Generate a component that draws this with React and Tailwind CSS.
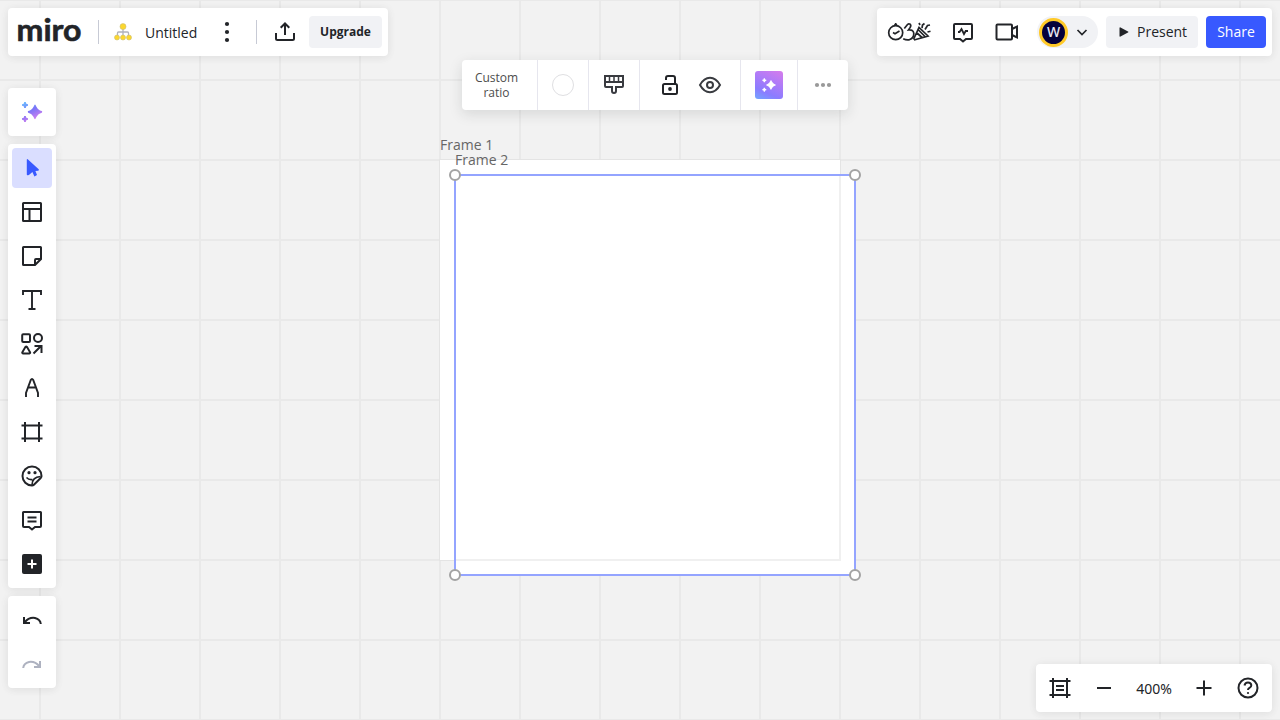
import React from "react";

const panel = "pointer-events-auto rounded bg-white shadow-[0_2px_8px_rgba(34,36,40,0.06),0_0_12px_rgba(34,36,40,0.04)]";

function Icon({ children, size = 24, sw = 2, className = "" }) {
  return (
    <svg
      width={size}
      height={size}
      viewBox="0 0 24 24"
      fill="none"
      stroke="currentColor"
      strokeWidth={sw}
      className={"shrink-0 " + className}
    >
      {children}
    </svg>
  );
}

function Sparkles({ fill, size = 24 }) {
  return (
    <svg width={size} height={size} viewBox="0 0 24 24" fill={fill} className="shrink-0">
      <path d="M15 4.500c.9 0 1.500 5.200 6.800 6.600.5.200.5 1.400 0 1.600C16.500 14 15.900 19.200 15 19.200S13.500 14 8.200 12.700c-.5-.2-.5-1.400 0-1.600C13.500 9.800 14.100 4.500 15 4.500z" />
      <path d="M4.200 2h1.600l.5 1.700L8 4.200v1.600l-1.700.5L5.800 8H4.200l-.5-1.700L2 5.800V4.200l1.700-.5zM4.200 16h1.600l.5 1.700 1.700.5v1.600l-1.700.5-.5 1.700H4.200l-.5-1.700-1.700-.5v-1.600l1.700-.5z" />
    </svg>
  );
}

function OrgIcon() {
  return (
    <svg width="18" height="18" viewBox="0 0 18 18" className="shrink-0">
      <path d="M9 5v8M3.500 13V10Q3.500 9 4.500 9h9q1 0 1 1v3" fill="none" stroke="#b0b2bc" strokeWidth="1.300" />
      <g fill="#fcd72e" stroke="#c9bd78" strokeWidth=".6">
        <circle cx="9" cy="3.600" r="3" />
        <circle cx="3" cy="14.500" r="2.500" />
        <circle cx="9" cy="14.500" r="2.500" />
        <circle cx="15" cy="14.500" r="2.500" />
      </g>
    </svg>
  );
}

function Header() {
  return (
    <header className="flex justify-between">
      <div className={panel + " flex h-12 w-[380px] items-center"}>
        <svg className="ml-[7px] shrink-0" width="70" height="48" viewBox="0 0 70 48" fontFamily="Lato, sans-serif" fontSize="31" fontWeight="700">
          <text x="1.500" y="33" textLength="65" lengthAdjust="spacingAndGlyphs" fill="#222428" stroke="#222428" strokeWidth=".6">miro</text>
        </svg>
        <div className="ml-[13px] h-6 w-px bg-[#c7cad5]" />
        <div className="ml-[15px]"><OrgIcon /></div>
        <span className="ml-[13px] w-[52px] pt-px text-sm text-[#222428]">Untitled</span>
        <svg className="ml-[18px] shrink-0" width="24" height="24" fill="#222428">
          <circle cx="12" cy="4" r="2.100" /><circle cx="12" cy="12" r="2.100" /><circle cx="12" cy="20" r="2.100" />
        </svg>
        <div className="ml-[17px] h-6 w-px bg-[#c7cad5]" />
        <Icon className="ml-4">
          <path d="M3 13v5.500q0 1.500 1.500 1.500h15q1.500 0 1.500-1.500V13M12 15V3.500M7.700 7.800 12 3.500l4.300 4.300" />
        </Icon>
        <button className="ml-3 h-8 w-[73px] rounded bg-[#f1f2f5] text-xs font-bold">Upgrade</button>
      </div>

      <div className={panel + " flex h-12 w-[395px] items-center"}>
        <svg className="ml-[10px] shrink-0" width="46" height="24" fill="none" stroke="#222428" strokeWidth="1.700">
          <circle cx="8.700" cy="12.700" r="7" />
          <path d="M7.200 4.800h3M8.700 3v3M6 12.500l2 1.200 4.500-2.700" />
          <path d="M17.300 8.500l3.200-4q1.300-1.300 2.600-.3 1.300 1.200.1 3.200L21.500 10q4.800-.7 5.300 3.300.3 5-4.600 6.500-3 .5-6-1" />
          <path d="m26.500 19.500 5.500-12 9 8.500-14 4M29.500 12.500l6 5.500M31 9.500l7 7M35 8l.5-3 2-1.500M38 9.500l2.500-4 2.500-.5M40.500 12l3-.8M33 5l-1-2" />
        </svg>
        <Icon className="ml-[18px]">
          <path d="M4 4h16q1 0 1 1v13q0 1-1 1h-5l-3 2.500L9 19H4q-1 0-1-1V5q0-1 1-1Z" />
          <path d="M7 12h1.500l2-3 2.500 5 1.700-3H17" strokeWidth="1.800" />
        </Icon>
        <Icon className="ml-5">
          <path d="M3 4.500h13q1 0 1 1v13q0 1-1 1H2.500q-1 0-1-1v-13q0-1 1-1Z" />
          <path d="m17 9 5-2.500v11L17 15" />
        </Icon>
        <div className="ml-[18px] flex h-8 w-[61px] items-center rounded-full bg-[#f1f2f5]">
          <div className="ml-[2px] flex h-[29px] w-[29px] shrink-0 items-center justify-center rounded-full border-[3px] border-[#ffc928] bg-[#05003b] font-['Noto_Sans',sans-serif] text-sm font-medium text-[#e8e6f2]">W</div>
          <svg className="ml-[8px]" width="12" height="12" fill="none" stroke="#222428" strokeWidth="1.700"><path d="m1.500 4 4.500 4.500L10.500 4" /></svg>
        </div>
        <button className="ml-2 flex h-8 w-[92px] shrink-0 items-center rounded bg-[#f1f2f5] text-sm">
          <svg className="ml-[13px] mr-[8px]" width="10" height="10" fill="#222428"><path d="M.5.800q.3-.8 1-.4l7.500 4q1 .6 0 1.200l-7.500 4Q.5 10 .5 9Z" /></svg>
          Present
        </button>
        <button className="ml-2 h-8 w-[60px] shrink-0 rounded bg-[#3859ff] text-sm text-white">Share</button>
      </div>
    </header>
  );
}

function ContextBar() {
  return (
    <div className="pointer-events-auto absolute left-[462px] top-[60px] flex h-[50px] w-[386px] divide-x divide-[#e6e6ee] rounded bg-white text-[#393b40] shadow-[0_4px_14px_rgba(34,36,40,0.13)]">
      <div className="flex w-[76px] items-center justify-center pr-1.5 text-center text-xs leading-[15px] text-[#4d4d4d]">Custom<br />ratio</div>
      <div className="flex w-[51px] items-center justify-center">
        <div className="h-[22px] w-[22px] rounded-full border border-[#dfdfe2]" />
      </div>
      <div className="flex w-[51px] items-center justify-center">
        <Icon>
          <path d="M3 3h18v10q0 1-1 1h-6v4q0 2-2 2t-2-2v-4H4q-1 0-1-1ZM3 9h18" />
          <path d="M7.500 3v6M12 3v6M16.500 3v6" strokeWidth="1.500" />
        </Icon>
      </div>
      <div className="flex w-[101px] items-center justify-center gap-4 pr-px">
        <Icon className="text-[#222428]">
          <rect x="5" y="11" width="14" height="10" rx="1.500" />
          <path d="M8 7V5q0-2 2-2h5q2 0 2 2v6" />
          <circle cx="12" cy="16" r="1.900" fill="currentColor" stroke="none" />
        </Icon>
        <Icon>
          <path d="M2 12q4-7.200 10-7.200T22 12q-4 7.200-10 7.200T2 12Z" />
          <circle cx="12" cy="12" r="3" />
        </Icon>
      </div>
      <div className="flex w-[57px] items-center justify-center">
        <div className="flex h-7 w-7 items-center justify-center rounded-[3px] bg-[linear-gradient(25deg,#72a6ff_0%,#8b7cff_28%,#b27bf7_65%,#d67ceb_100%)]">
          <Sparkles fill="white" size={16} />
        </div>
      </div>
      <div className="flex w-[50px] items-center justify-center">
        <svg width="18" height="6" fill="#999"><circle cx="3" cy="3" r="2.100" /><circle cx="9" cy="3" r="2.100" /><circle cx="15" cy="3" r="2.100" /></svg>
      </div>
    </div>
  );
}

const tools = [
  ["Select", <path d="M6.800 4q0-1.700 1.200-.6l10.700 9.900q.9 1.200-.7 1.400l-2.600.3 1.600 4-2.600 1.600-2-4.600-3.200 2.700Q6.800 19.900 6.800 18.500Z" fill="#3859ff" stroke="none" />],
  ["Templates", <path d="M3.500 3h17q.5 0 .5.500v17q0 .5-.5.500h-17q-.5 0-.5-.5v-17q0-.5.5-.5ZM3 9h18M9.500 9v12" />],
  ["Sticky note", <><path d="M3.500 3h17q.5 0 .5.500V15l-6 6H3.500q-.5 0-.5-.5v-17q0-.5.5-.5Z" /><path d="M15 21v-5q0-1 1-1h5" /></>],
  ["Text", <path d="M3 7V3h18v4M12 3v18M8.500 21h7" strokeWidth="1.900" />],
  ["Shapes", <><rect x="2.200" y="2.200" width="7.800" height="7.800" rx="1" /><circle cx="18" cy="6" r="4" /><path d="M5.500 14.800q.7-.8 1.400 0l3.200 5.500q.3 1-.7 1.200H3q-1-.2-.7-1.200ZM13.500 21.500l7.500-7.500M14.500 14h7v7" /></>],
  ["Pen", <path d="M6 21v-4.200L10.800 4q1.200-2.200 2.400 0L18 16.800V21M8.800 11.500h6.400" strokeWidth="1.900" />],
  ["Frame", <path d="M5 2v20M19 2v20M1.500 5.500h21M1.500 18.500h21" />],
  ["Stickers", <><path d="M12 21.500A9.500 9.500 0 1 1 21.500 12q0 1-.6 1.700l-7 7q-.8.8-1.900.8Z" /><path d="M12 21q.2-8 8.500-8.500M6.500 13.500q2.500 2.700 6 2" strokeWidth="1.700" /><circle cx="9" cy="8.700" r="1.600" fill="currentColor" stroke="none" /><circle cx="15" cy="8.700" r="1.600" fill="currentColor" stroke="none" /></>],
  ["Comment", <><path d="M3.500 4h17q.5 0 .5.500v13.500q0 1-1 1h-5l-3 2.500L9 19H4q-1 0-1-1V4.500q0-.5.5-.5Z" /><path d="M7.500 9.500h9M7.500 13.500h9" /></>],
  ["More", <><rect x="2" y="2" width="20" height="20" rx="2" fill="currentColor" stroke="none" /><path d="M12 7.500v9M7.500 12h9" stroke="white" /></>],
];

function Toolbar() {
  return (
    <nav className="mt-8 flex w-12 flex-col gap-2">
      <div className={panel + " flex h-12 items-center justify-center"}>
        <svg width="0" height="0" className="absolute">
          <defs>
            <linearGradient id="spark" gradientUnits="userSpaceOnUse" x1="2" y1="2" x2="12" y2="22">
              <stop offset="0" stopColor="#6bc3ff" />
              <stop offset=".5" stopColor="#7a74f8" />
              <stop offset="1" stopColor="#d880ee" />
            </linearGradient>
          </defs>
        </svg>
        <Sparkles fill="url(#spark)" />
      </div>
      <div className={panel + " flex flex-col gap-1 p-1"}>
        {tools.map(([name, art], i) => (
          <button key={name} aria-label={name} className={"flex h-10 w-10 items-center justify-center rounded " + (i === 0 ? "bg-[#dadeff]" : "")}>
            <Icon>{art}</Icon>
          </button>
        ))}
      </div>
      <div className={panel + " flex flex-col gap-1 p-1"}>
        <button aria-label="Undo" className="flex h-10 w-10 items-center justify-center pt-2">
          <Icon><path d="M4 5v6h6M4.500 10.500q4.500-5.500 10.500-4.500 5.200 1.200 5.800 6" /></Icon>
        </button>
        <button aria-label="Redo" className="flex h-10 w-10 items-center justify-center pt-2 text-[#aeb2c0]">
          <Icon><path d="M20 5v6h-6M19.500 10.500Q15 5 9 6q-5.200 1.200-5.800 6" /></Icon>
        </button>
      </div>
    </nav>
  );
}

function ZoomBar() {
  return (
    <div className={panel + " absolute bottom-2 right-2 flex h-12 w-[236px] items-center"}>
      <Icon className="ml-3"><path d="M5 2v20M19 2v20M1.500 5h21M1.500 19h21M8 10h8M8 14h8" /></Icon>
      <Icon className="ml-5"><path d="M5 12h14" /></Icon>
      <span className="w-[76px] pt-px text-center font-['Noto_Sans',sans-serif] text-sm">400%</span>
      <Icon><path d="M4.500 12h15M12 4.500v15" /></Icon>
      <Icon className="ml-5">
        <circle cx="12" cy="12" r="9.500" />
        <path d="M8.500 9.500Q9 6.500 12 6.500t3.300 2.700q0 1.800-1.800 2.700-1.500.8-1.500 2.100" />
        <circle cx="12" cy="17" r="1.100" fill="currentColor" stroke="none" />
      </Icon>
    </div>
  );
}

function Handle({ className }) {
  return <div className={"absolute h-3 w-3 rounded-full border-2 border-[#a3a3a3] bg-white " + className} />;
}

function Canvas() {
  return (
    <div className="absolute inset-0 overflow-hidden bg-[#f2f2f2] bg-[linear-gradient(to_right,#e9e9e9_2px,transparent_2px),linear-gradient(to_bottom,#e9e9e9_2px,transparent_2px)] bg-[length:80px_80px] bg-[position:39px_-1px]">
      <div className="absolute left-[439px] top-[159px] h-[402px] w-[402px] border border-[#e4e4e4] bg-white" />
      <div className="absolute left-[455px] top-[175px] h-[400px] w-[400px] bg-white" />
      <div className="absolute left-[839px] top-[175px] h-[386px] w-[2px] bg-[#f0f0f0]" />
      <div className="absolute left-[455px] top-[559px] h-[2px] w-[386px] bg-[#f0f0f0]" />
      <div className="absolute left-[454px] top-[174px] h-[402px] w-[402px] border-2 border-[#94a4ff]">
        <Handle className="-left-[7px] -top-[7px]" />
        <Handle className="-right-[7px] -top-[7px]" />
        <Handle className="-bottom-[7px] -left-[7px]" />
        <Handle className="-bottom-[7px] -right-[7px]" />
      </div>
      <span className="absolute left-[440px] top-[135px] whitespace-nowrap text-sm leading-5 text-[#666]">Frame 1</span>
      <span className="absolute left-[455px] top-[150px] whitespace-nowrap text-sm leading-5 text-[#666]">Frame 2</span>
    </div>
  );
}

export default function App() {
  return (
    <div className="relative h-screen w-screen overflow-hidden font-['Open_Sans','Noto_Sans',sans-serif] text-[#222428]">
      <Canvas />
      <div className="pointer-events-none relative flex h-full flex-col p-2">
        <Header />
        <ContextBar />
        <Toolbar />
        <ZoomBar />
      </div>
    </div>
  );
}
